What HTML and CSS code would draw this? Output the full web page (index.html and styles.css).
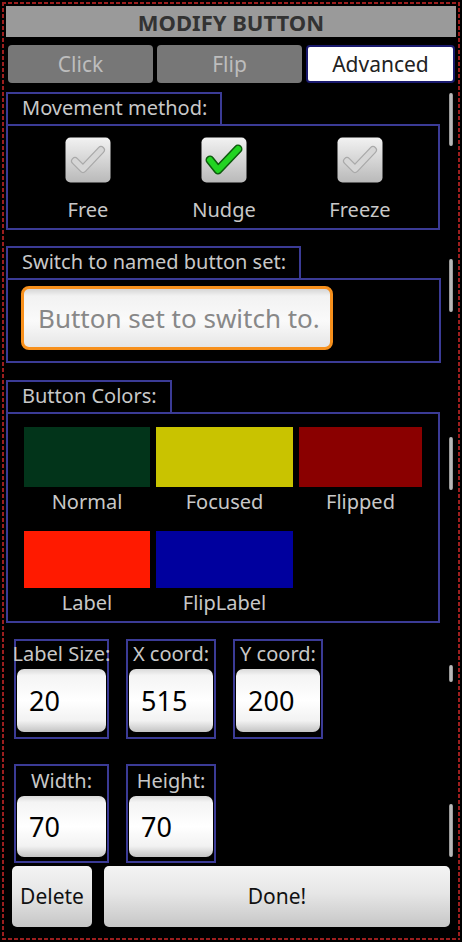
FILE: index.html
```html
<!DOCTYPE html>
<html>
<head>
<meta charset="utf-8">
<link rel="stylesheet" href="styles.css">
</head>
<body>
<div class="frame">
  <div class="title">MODIFY BUTTON</div>
  <div class="tabs">
    <div class="tab">Click</div>
    <div class="tab">Flip</div>
    <div class="tab tab-active">Advanced</div>
  </div>

  <div class="section sec-move">
    <div class="legend">Movement method:</div>
    <div class="box box-move">
      <div class="opt">
        <svg class="cb" viewBox="0 0 46 46" width="46" height="46"><defs><linearGradient id="g1" x1="0" y1="0" x2="0" y2="1"><stop offset="0" stop-color="#f2f2f2"/><stop offset="1" stop-color="#b9b9b9"/></linearGradient></defs><rect x="0.5" y="0.5" width="45" height="45" rx="5" fill="url(#g1)"/><path d="M10 24 L18 32 L36 13" fill="none" stroke="#a9a9a9" stroke-width="8" stroke-linecap="round" stroke-linejoin="round"/><path d="M10 24 L18 32 L36 13" fill="none" stroke="#d6d6d6" stroke-width="5.5" stroke-linecap="round" stroke-linejoin="round"/></svg>
        <span class="opt-label">Free</span>
      </div>
      <div class="opt">
        <svg class="cb" viewBox="0 0 46 46" width="46" height="46"><defs><linearGradient id="g2" x1="0" y1="0" x2="0" y2="1"><stop offset="0" stop-color="#f2f2f2"/><stop offset="1" stop-color="#b9b9b9"/></linearGradient></defs><rect x="0.5" y="0.5" width="45" height="45" rx="5" fill="url(#g2)"/><path d="M9 23 L17 33 L37 12" fill="none" stroke="#0d5a0d" stroke-width="9" stroke-linecap="round" stroke-linejoin="round"/><path d="M9 23 L17 33 L37 12" fill="none" stroke="#22d422" stroke-width="6" stroke-linecap="round" stroke-linejoin="round"/></svg>
        <span class="opt-label">Nudge</span>
      </div>
      <div class="opt">
        <svg class="cb" viewBox="0 0 46 46" width="46" height="46"><defs><linearGradient id="g3" x1="0" y1="0" x2="0" y2="1"><stop offset="0" stop-color="#f2f2f2"/><stop offset="1" stop-color="#b9b9b9"/></linearGradient></defs><rect x="0.5" y="0.5" width="45" height="45" rx="5" fill="url(#g3)"/><path d="M10 24 L18 32 L36 13" fill="none" stroke="#a9a9a9" stroke-width="8" stroke-linecap="round" stroke-linejoin="round"/><path d="M10 24 L18 32 L36 13" fill="none" stroke="#d6d6d6" stroke-width="5.5" stroke-linecap="round" stroke-linejoin="round"/></svg>
        <span class="opt-label">Freeze</span>
      </div>
    </div>
  </div>

  <div class="section sec-switch">
    <div class="legend">Switch to named button set:</div>
    <div class="box box-switch">
      <div class="textfield">Button set to switch to.</div>
    </div>
  </div>

  <div class="section sec-colors">
    <div class="legend">Button Colors:</div>
    <div class="box box-colors">
      <div class="swatch-grid">
        <div class="sw"><div class="sw-color c-normal"></div><div class="sw-label">Normal</div></div>
        <div class="sw"><div class="sw-color c-focused"></div><div class="sw-label">Focused</div></div>
        <div class="sw"><div class="sw-color c-flipped"></div><div class="sw-label">Flipped</div></div>
        <div class="sw sw-row2"><div class="sw-color c-label"></div><div class="sw-label">Label</div></div>
        <div class="sw sw-row2"><div class="sw-color c-fliplabel"></div><div class="sw-label">FlipLabel</div></div>
      </div>
    </div>
  </div>

  <div class="nums nums-1">
    <div class="num num-wide"><div class="num-label">Label Size:</div><div class="num-input">20</div></div>
    <div class="num"><div class="num-label">X coord:</div><div class="num-input">515</div></div>
    <div class="num"><div class="num-label">Y coord:</div><div class="num-input">200</div></div>
  </div>
  <div class="nums nums-2">
    <div class="num num-wide"><div class="num-label">Width:</div><div class="num-input">70</div></div>
    <div class="num"><div class="num-label">Height:</div><div class="num-input">70</div></div>
  </div>

  <div class="actions">
    <div class="btn btn-delete">Delete</div>
    <div class="btn btn-done">Done!</div>
  </div>

  <div class="scroll s1"></div>
  <div class="scroll s2"></div>
  <div class="scroll s3"></div>
  <div class="scroll s4"></div>
  <div class="scroll s5"></div>
</div>
</body>
</html>
```

FILE: styles.css
```css
* { box-sizing: border-box; }
html, body {
  margin: 0;
  padding: 0;
  background: #000;
  height: 100%;
}
body {
  font-family: "Noto Sans", "DejaVu Sans", sans-serif;
  color: #c8c8c8;
}
.frame {
  position: relative;
  margin: 2px;
  height: 938px;
  border: 2px solid transparent;
  padding: 2px 1px 0 2px;
  background-color: #000;
  background-image:
    repeating-linear-gradient(90deg, #9c1e1e 0 4px, transparent 4px 6px),
    repeating-linear-gradient(90deg, #9c1e1e 0 4px, transparent 4px 6px),
    repeating-linear-gradient(180deg, #9c1e1e 0 4px, transparent 4px 6px),
    repeating-linear-gradient(180deg, #9c1e1e 0 4px, transparent 4px 6px);
  background-size: 100% 2px, 100% 2px, 2px 100%, 2px 100%;
  background-position: top left, bottom left, top left, top right;
  background-repeat: no-repeat;
  background-origin: border-box;
  background-clip: border-box;
}
.title {
  height: 31px;
  background: #9a9a9a;
  color: #333;
  font-weight: bold;
  font-size: 22px;
  line-height: 32px;
  text-align: center;
  width: 450px;
}
.tabs {
  display: flex;
  gap: 4px;
  margin-top: 8px;
  padding-left: 2px;
  width: 449px;
}
.tab {
  flex: 1;
  height: 38px;
  border-radius: 4px;
  background: #777;
  color: #bdbdbd;
  font-size: 21px;
  line-height: 38px;
  text-align: center;
}
.tab-active {
  background: #fff;
  color: #222;
  border: 2px solid #1a1a6e;
  line-height: 34px;
}
.section { display: flex; flex-direction: column; align-items: flex-start; }
.sec-move { margin-top: 9px; }
.sec-switch { margin-top: 16px; }
.sec-colors { margin-top: 17px; }
.legend {
  position: relative;
  height: 34px;
  border: 2px solid #3b3b96;
  padding: 0 13px 0 14px;
  margin-bottom: -2px;
  font-size: 20px;
  line-height: 27px;
  color: #c8c8c8;
}
.box {
  border: 2px solid #3b3b96;
  width: 434px;
}
.box-move {
  height: 106px;
  display: flex;
  padding: 11px 0 0 12px;
}
.opt {
  width: 136px;
  display: flex;
  flex-direction: column;
  align-items: center;
}
.cb { display: block; }
.opt-label {
  margin-top: 13px;
  font-size: 20px;
  line-height: 28px;
}
.box-switch {
  width: 435px;
  height: 85px;
  padding: 6px 0 0 13px;
}
.textfield {
  width: 312px;
  height: 64px;
  border: 3px solid #f7901c;
  border-radius: 8px;
  background: linear-gradient(#d6d6d6 0%, #f2f2f2 12%, #fafafa 55%, #e6e6e6 100%);
  color: #888;
  font-size: 26px;
  line-height: 58px;
  padding-left: 14px;
  white-space: nowrap;
}
.box-colors {
  height: 211px;
  padding: 13px 0 0 16px;
}
.swatch-grid {
  display: grid;
  grid-template-columns: 126px 137px 123px;
  column-gap: 6px;
  row-gap: 14px;
}
.sw-color { height: 60px; }
.sw-row2 .sw-color { height: 57px; }
.sw-label {
  text-align: center;
  font-size: 20px;
  line-height: 30px;
}
.c-normal { background: #02341a; }
.c-focused { background: #c9c300; }
.c-flipped { background: #8a0000; }
.c-label { background: #ff1a00; }
.c-fliplabel { background: #00009e; }
.nums {
  display: flex;
  gap: 17px;
  padding-left: 8px;
}
.nums-1 { margin-top: 16px; }
.nums-2 { margin-top: 25px; }
.num {
  width: 90px;
  height: 100px;
  border: 2px solid #3b3b96;
  display: flex;
  flex-direction: column;
  align-items: center;
}
.nums-2 .num { height: 99px; }
.num-wide { width: 95px; }
.num-label {
  height: 26px;
  font-size: 20px;
  line-height: 26px;
  white-space: nowrap;
  text-align: center;
}
.nums-2 .num-label { height: 28px; line-height: 30px; }
.num-input {
  margin-top: 2px;
  width: calc(100% - 2px);
  margin-left: 1px;
  align-self: flex-start;
  height: 63px;
  border-radius: 7px;
  background: linear-gradient(#d9d9d9 0%, #f4f4f4 10%, #ffffff 50%, #f2f2f2 82%, #c4c4c4 100%);
  color: #000;
  font-size: 27px;
  line-height: 63px;
  padding-left: 12px;
}
.nums-2 .num-input { height: 61px; line-height: 61px; }
.actions {
  display: flex;
  gap: 12px;
  margin-top: 3px;
  padding-left: 6px;
}
.btn {
  height: 61px;
  border-radius: 5px;
  background: linear-gradient(#f4f4f4 0%, #e6e6e6 45%, #c6c6c6 100%);
  color: #111;
  font-size: 21px;
  line-height: 61px;
  text-align: center;
}
.btn-delete { width: 80px; }
.btn-done { width: 346px; }
.scroll {
  position: absolute;
  left: 445px;
  width: 4px;
  border-radius: 2px;
  background: linear-gradient(90deg, #8a8a8a, #c8c8c8, #8a8a8a);
}
.s1 { top: 89px; height: 53px; }
.s2 { top: 255px; height: 53px; }
.s3 { top: 433px; height: 53px; }
.s4 { top: 661px; height: 17px; }
.s5 { top: 800px; height: 53px; }
```
